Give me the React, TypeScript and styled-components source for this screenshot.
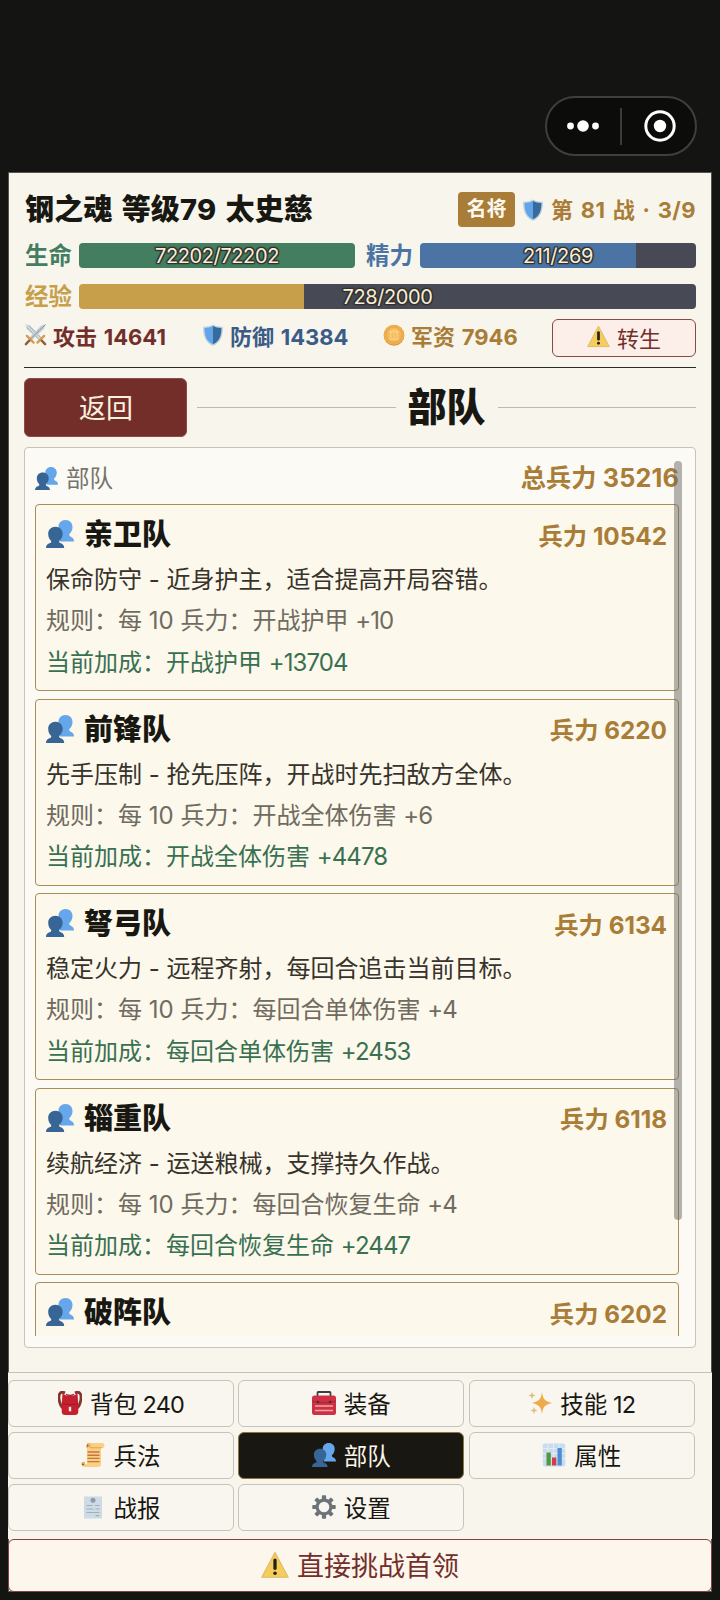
import React from "react";
import styled, { createGlobalStyle } from "styled-components";

const Global = createGlobalStyle`
  * { box-sizing: border-box; }
  body { margin: 0; background: #141412; }
  button { font: inherit; margin: 0; padding: 0; cursor: pointer; }
  svg { display: block; flex: none; }
`;

const ink = "#181712";
const gold = "#a97d37";
const wine = "#732e2a";

const Screen = styled.div`
  width: 720px;
  height: 1600px;
  padding: 0 8px 8px;
  display: flex;
  flex-direction: column;
  background: #141412;
  color: ${ink};
  font-family: Inter, "Noto Sans CJK SC", sans-serif;
  overflow: hidden;
`;

const SystemBar = styled.div`
  height: 172px;
  flex: none;
  display: flex;
  justify-content: flex-end;
  align-items: flex-end;
  padding: 0 15px 16px 0;
`;

const Capsule = styled.div`
  width: 152px;
  height: 60px;
  border: 2px solid #3f3f3d;
  border-radius: 30px;
  background: #0c0c0b;
  display: flex;
  align-items: center;
  justify-content: space-between;
  padding: 0 19px;
`;

const CapsuleRule = styled.i`
  width: 2px;
  height: 37px;
  margin-right: 2px;
  background: #3b3b39;
`;

const Page = styled.main`
  height: 1420px;
  display: flex;
  flex-direction: column;
  background: #f7f5ec;
  border: 1px solid #55534b;
`;

const Hero = styled.header`
  margin: 0 15px;
  height: 195px;
  flex: none;
  border-bottom: 1px solid #2b2a24;
`;

const NameRow = styled.div`
  display: flex;
  align-items: center;
  height: 35px;
  margin-top: 19px;
`;

const HeroName = styled.h1`
  margin: 0 0 0 1px;
  flex: 1;
  font-size: 29px;
  line-height: 34px;
  font-weight: 800;
  letter-spacing: 0.2px;
  word-spacing: 2.5px;
  white-space: pre;
`;

const Rank = styled.span`
  width: 57px;
  height: 35px;
  border-radius: 4px;
  background: ${gold};
  color: #fdf9ee;
  font-size: 20px;
  font-weight: 700;
  line-height: 34px;
  text-align: center;
`;

const Battle = styled.span`
  display: flex;
  align-items: center;
  gap: 7px;
  margin-left: 7px;
  color: ${gold};
  font-size: 22px;
  font-weight: 700;
  line-height: 34px;
  letter-spacing: 0.4px;
  word-spacing: 1.8px;
  white-space: pre;
`;

const Meters = styled.div`
  display: flex;
  height: 25px;
  margin-top: 16px;
  gap: 10px;
`;

const MeterBox = styled.div`
  flex: 1;
  display: flex;
`;

const MeterLabel = styled.span<{ $tone: string }>`
  width: 55px;
  padding-left: 1px;
  color: ${(p) => p.$tone};
  font-size: 23.5px;
  font-weight: 700;
  line-height: 25px;
  white-space: nowrap;
`;

const Track = styled.div<{ $fill: number; $tone: string }>`
  flex: 1;
  border-radius: 4px;
  background: linear-gradient(
    to right,
    ${(p) => p.$tone} ${(p) => p.$fill}%,
    #474954 ${(p) => p.$fill}%
  );
  color: #f5eed9;
  font-size: 20px;
  line-height: 26px;
  letter-spacing: -0.4px;
  text-align: center;
  text-shadow: 1px 0 1px #34322c, -1px 0 1px #34322c, 0 1px 1px #34322c,
    0 -1px 1px #34322c, 1px 1px 1px #34322c, -1px -1px 1px #34322c,
    1px -1px 1px #34322c, -1px 1px 1px #34322c;
`;

const Stats = styled.div`
  display: flex;
  height: 39px;
  margin-top: 10px;
`;

const Stat = styled.span<{ $tone: string; $w: number }>`
  width: ${(p) => p.$w}px;
  height: 31px;
  display: flex;
  align-items: center;
  gap: 6px;
  color: ${(p) => p.$tone};
  font-size: 22px;
  font-weight: 700;
  word-spacing: 1.5px;
  white-space: pre;
`;

const Rebirth = styled.button`
  width: 144px;
  height: 38px;
  margin-left: auto;
  padding-bottom: 3px;
  display: flex;
  align-items: center;
  justify-content: center;
  gap: 7px;
  border: 1px solid #874a45;
  border-radius: 6px;
  background: #fcefea;
  color: ${wine};
  font-size: 22px;
`;

const Heading = styled.div`
  display: flex;
  align-items: center;
  height: 59px;
  margin: 10px 15px 0;
  flex: none;
`;

const Back = styled.button`
  width: 163px;
  height: 59px;
  margin-right: 10px;
  padding: 0 0 3px 1px;
  border: 1px solid #8f4b45;
  border-radius: 6px;
  background: ${wine};
  color: #fbf1df;
  font-size: 27px;
`;

const Rule = styled.i`
  flex: 1;
  height: 1px;
  background: #bcbab2;
`;

const SectionTitle = styled.h2`
  width: 102px;
  margin: 0;
  padding-bottom: 2px;
  font-size: 39px;
  line-height: 56px;
  font-weight: 800;
  text-align: center;
  white-space: nowrap;
`;

const Panel = styled.section`
  position: relative;
  height: 901px;
  flex: none;
  margin: 10px 15px 24px;
  padding: 11px 16px 11px 10px;
  border: 1px solid #c6c3ba;
  border-radius: 4px;
  background: #fbfaf5;
`;

const Scroll = styled.div`
  height: 877px;
  overflow: hidden;
  display: flex;
  flex-direction: column;
`;

const Total = styled.div`
  height: 45px;
  flex: none;
  display: flex;
  align-items: flex-start;
  justify-content: space-between;
  line-height: 39px;
  font-size: 23.5px;
  color: #77736b;
`;

const Tag = styled.span`
  display: flex;
  align-items: center;
  gap: 8px;
  height: 38px;
`;

const Force = styled.b<{ $large?: boolean }>`
  color: ${gold};
  font-size: ${(p) => (p.$large ? 25.2 : 24.3)}px;
  font-weight: 700;
  letter-spacing: ${(p) => (p.$large ? 0.15 : 0)}px;
  white-space: pre;
`;

const Thumb = styled.i`
  position: absolute;
  top: 13px;
  left: 649px;
  width: 8px;
  height: 759px;
  border-radius: 4px;
  background: rgba(105, 103, 98, 0.5);
`;

const Card = styled.article`
  height: 187px;
  flex: none;
  margin-bottom: 7.5px;
  padding: 8px 11px 0 10px;
  border: 1px solid #ab8c55;
  border-radius: 4px;
  background: #fcf8eb;
`;

const CardHead = styled.div`
  height: 42px;
  display: flex;
  align-items: center;
  gap: 10px;
`;

const CardName = styled.h3`
  flex: 1;
  margin: 0;
  padding-top: 2px;
  font-size: 29px;
  font-weight: 800;
  line-height: 40px;
`;

const Line = styled.p<{ $tone: string }>`
  margin: 0;
  height: 41.3px;
  line-height: 50px;
  font-size: 24px;
  color: ${(p) => p.$tone};
  white-space: pre;
`;

const Num = styled.span`
  letter-spacing: -0.9px;
`;

const Nav = styled.nav`
  display: grid;
  grid-template-columns: repeat(3, 225.8px);
  grid-auto-rows: 47px;
  gap: 5px 4.6px;
  height: 167px;
  flex: none;
  margin: 0 -1px;
  padding-top: 7px;
  border-top: 1px solid #c4c1b8;
  background: #f7f5ec;
`;

const NavButton = styled.button<{ $on?: boolean }>`
  display: flex;
  align-items: center;
  justify-content: center;
  gap: 8px;
  padding-bottom: 2px;
  border: 1px solid ${(p) => (p.$on ? "#8e7440" : "#c6c3ba")};
  border-radius: 6px;
  background: ${(p) => (p.$on ? "#181712" : "#f8f6ee")};
  color: ${(p) => (p.$on ? "#fbf5e6" : ink)};
  font-size: 23.5px;
  white-space: pre;
`;

const Challenge = styled.button`
  flex: 1;
  margin: 0 -1px -1px;
  padding-bottom: 2px;
  display: flex;
  align-items: center;
  justify-content: center;
  gap: 8px;
  border: 1px solid #85413b;
  border-radius: 6px;
  background: #fdf6ec;
  color: ${wine};
  font-size: 27px;
`;

type IconProps = { size: number };

const Shield = ({ size }: IconProps) => (
  <svg width={size} height={size} viewBox="0 0 24 24">
    <path d="M12 .5C9 2.500 5 3.100 1.300 2.900 1 12 3.200 20 12 23.800c8.800-3.800 11-11.800 10.700-20.900C19 3.100 15 2.500 12 .5z" fill="#b9cfe0" />
    <path d="M12 2.200C9.500 3.600 6 4.400 2.800 4.300 2.700 12 4.700 18.800 12 22.200z" fill="#62a5e6" />
    <path d="M12 2.200c2.500 1.400 6 2.200 9.200 2.100C21.300 12 19.300 18.800 12 22.200z" fill="#386a9e" />
  </svg>
);

const Swords = ({ size }: IconProps) => (
  <svg width={size} height={size} viewBox="0 0 24 24">
    <path d="M1.500 1.500l4.500 1.200L19 16l-2.500 2.500L3 6z" fill="#aebac2" />
    <path d="M1.500 1.500L17.800 17.300" stroke="#e3e8ea" strokeWidth="1.200" />
    <path d="M22.500 1.500L18 2.700 5 16l2.500 2.500L21 6z" fill="#c3ccd2" />
    <path d="M22.500 1.500L6.200 17.300" stroke="#8795a0" strokeWidth="1" />
    <path d="M3 13.500l7 7M21 13.500l-7 7" stroke="#d99b4a" strokeWidth="2.400" strokeLinecap="round" />
    <path d="M5.500 18.500l-3.500 3.500M18.500 18.500l3.500 3.500" stroke="#8f5f3d" strokeWidth="2.600" strokeLinecap="round" />
  </svg>
);

const Coin = ({ size }: IconProps) => (
  <svg width={size} height={size} viewBox="0 0 24 24">
    <circle cx="12" cy="12.500" r="11.300" fill="#dc943b" />
    <circle cx="12" cy="11.700" r="11" fill="#f1ae4b" />
    <circle cx="12" cy="11.700" r="8.500" fill="#f4b95c" stroke="#e5a044" strokeWidth=".8" />
    <path d="M7 9l5-2.700L17 9zM8.500 10v5M12 10v5M15.500 10v5M7 16.500h10" stroke="#fbd68c" strokeWidth="1.200" fill="none" />
  </svg>
);

const Warning = ({ size }: IconProps) => (
  <svg width={size} height={size} viewBox="0 0 24 24">
    <path d="M12 1.200L23.300 22.500H.7z" fill="#f5cd5c" stroke="#dfbc62" strokeWidth="1" strokeLinejoin="round" />
    <path d="M12 7.800v7" stroke="#252119" strokeWidth="2.800" strokeLinecap="round" />
    <circle cx="12" cy="19" r="1.500" fill="#252119" />
  </svg>
);

const People = ({ size }: IconProps) => (
  <svg width={size} height={size} viewBox="0 0 28 28">
    <path d="M19.500 0c4.300 0 7 3 7 7 0 3-1.300 5.500-3.200 7.100-.2 1.600.2 2.200 1.500 2.700 2 .7 3.200 2.200 3.200 4.700H14V11.500L12.500 7c0-4 2.700-7 7-7z" fill="#66a6ea" />
    <path d="M9.500 6.800c4.300 0 7.200 2.900 7.200 6.900 0 3-1.500 5.500-3.500 7.200-.2 1.300.3 1.900 1.700 2.400 2 .7 3.300 2.200 3.300 4.700H0c0-2.500 1.300-4 3.400-4.700 1.600-.5 2-1.100 1.800-2.400-1.800-1.500-3-4.200-3-7.200 0-4 3-6.900 7.300-6.900z" fill="#376596" />
  </svg>
);

const Backpack = ({ size }: IconProps) => (
  <svg width={size} height={size} viewBox="0 0 24 24">
    <path d="M7 2C2-.5 0 3.500 1.400 10c.6 3 1.500 5.500 3.500 7M17 2c5-2.500 7 1.500 5.600 8-.6 3-1.500 5.500-3.500 7" fill="none" stroke="#84352f" strokeWidth="2.800" />
    <path d="M4.500 2.500Q12 7.500 19.500 2.500l.8 11V20.500q0 3.500-3.500 3.500H7.200q-3.500 0-3.500-3.500v-7z" fill="#c5202f" />
    <path d="M8 3.300q4 2.200 8 0M4.500 12.500q7.500 2 15 0" fill="none" stroke="#9e1b29" strokeWidth="1.200" />
    <rect x="10.800" y="15.800" width="2.400" height="4.500" fill="#f3e7e1" />
  </svg>
);

const Toolbox = ({ size }: IconProps) => (
  <svg width={size} height={size} viewBox="0 0 24 24">
    <path d="M5.500 5V1.700q0-.7.7-.7h11.600q.7 0 .7.700V5" fill="none" stroke="#3c3e48" strokeWidth="1.800" />
    <rect x="0" y="4.500" width="24" height="19.500" rx="2.500" fill="#ce3144" />
    <path d="M0 10q12 3.500 24 0" stroke="#a42637" fill="none" />
    <path d="M4.800 10.500l2.200 1M17 11.500l2.200-1" stroke="#45313a" strokeWidth="2.400" />
    <path d="M3 15h18M3 19.500h18" stroke="#efa4a7" strokeWidth="1.300" />
  </svg>
);

const Sparkles = ({ size }: IconProps) => (
  <svg width={size} height={size} viewBox="0 0 24 24">
    <path d="M14 1c1 7 2.500 9.300 10 11-7.500 1.700-9 4-10 11-1-7-2.500-9.300-10-11 7.500-1.700 9-4 10-11z" fill="#efab4b" />
    <path d="M4 .5c.6 2.800 1 3.500 4 4-3 .6-3.400 1.300-4 4-.6-2.700-1-3.400-4-4 3-.5 3.400-1.200 4-4zM6 15.500c.6 2.800 1 3.500 4 4-3 .6-3.400 1.300-4 4-.6-2.700-1-3.400-4-4 3-.5 3.400-1.200 4-4z" fill="#e3c089" />
  </svg>
);

const Scroller = ({ size }: IconProps) => (
  <svg width={size} height={size} viewBox="0 0 24 24">
    <path d="M6 0h15.500C24 0 24 5 21.500 5H20v15.500q0 3.500-3 3.500H3.500C0 24-.5 19 2 19q1.800 0 1.800 2H6z" fill="#fad184" />
    <path d="M6 5V2.200Q6 .5 7.500.5 9.500.5 9 4.800h12M1 21.500Q1 19 3.200 19.200v2.600" fill="none" stroke="#dca350" strokeWidth="1" />
    <circle cx="6.800" cy="2.800" r="1" fill="#8d5a34" />
    <circle cx="2" cy="21.500" r="1" fill="#8d5a34" />
    <path d="M6.500 9h12M6.500 12.200h12M6.500 15.400h12M6.500 18.600h12" stroke="#c7753c" strokeWidth="1.400" />
  </svg>
);

const Chart = ({ size }: IconProps) => (
  <svg width={size} height={size} viewBox="0 0 24 24">
    <rect x=".8" y=".5" width="22.400" height="23" rx="2" fill="#c9dcee" />
    <path d="M1 5.500h22M1 10.500h22M1 15.500h22M6 1v22M11.500 1v22M17 1v22" stroke="#e8f0f7" strokeWidth=".8" />
    <rect x="4.500" y="9.500" width="4.300" height="13" fill="#55953f" />
    <rect x="10" y="14.500" width="4.300" height="8" fill="#cf3e49" />
    <rect x="15.500" y="5" width="4.300" height="17.500" fill="#4e8dd2" />
  </svg>
);

const Receipt = ({ size }: IconProps) => (
  <svg width={size} height={size} viewBox="0 0 24 24">
    <path d="M3 1l1.500 1L6 1l1.500 1L9 1l1.500 1L12 1l1.500 1L15 1l1.500 1L18 1l1.500 1L21 1v22.500H3z" fill="#cfdbe4" />
    <circle cx="12" cy="5.300" r="2.500" fill="#899daf" />
    <path d="M5.500 10.500h6M14 10.500h4.500M5.500 14h7M14.500 14h4M5.500 17.500h13M14.500 20.700h4" stroke="#9db0bf" strokeWidth="1.200" />
  </svg>
);

const Gear = ({ size }: IconProps) => (
  <svg width={size} height={size} viewBox="0 0 24 24">
    {[0, 45, 90, 135, 180, 225, 270, 315].map((a) => (
      <path key={a} d="M10.800 5V1.200h2.400V5z" fill="#6c737a" stroke="#6c737a" strokeWidth="1.800" strokeLinejoin="round" transform={`rotate(${a} 12 12)`} />
    ))}
    <circle cx="12" cy="12" r="6.900" fill="none" stroke="#6c737a" strokeWidth="3.200" />
  </svg>
);

const Dots = () => (
  <svg width="34" height="12" viewBox="0 0 34 12">
    <g fill="#fff">
      <circle cx="4.500" cy="6" r="3.400" />
      <circle cx="17" cy="6" r="5.800" />
      <circle cx="29.500" cy="6" r="3.400" />
    </g>
  </svg>
);

const Target = () => (
  <svg width="32" height="32" viewBox="0 0 32 32">
    <circle cx="16" cy="16" r="14.200" fill="none" stroke="#fff" strokeWidth="3" />
    <circle cx="16" cy="16" r="6.200" fill="#fff" />
  </svg>
);

type MeterProps = { label: string; tone: string; fill: number; value: string };

const Meter = ({ label, tone, fill, value }: MeterProps) => (
  <MeterBox>
    <MeterLabel $tone={tone}>{label}</MeterLabel>
    <Track $fill={fill} $tone={tone}>{value}</Track>
  </MeterBox>
);

const troops = [
  { name: "亲卫队", force: 10542, role: "保命防守 - 近身护主，适合提高开局容错。", effect: "开战护甲", per: 10, bonus: 13704 },
  { name: "前锋队", force: 6220, role: "先手压制 - 抢先压阵，开战时先扫敌方全体。", effect: "开战全体伤害", per: 6, bonus: 4478 },
  { name: "弩弓队", force: 6134, role: "稳定火力 - 远程齐射，每回合追击当前目标。", effect: "每回合单体伤害", per: 4, bonus: 2453 },
  { name: "辎重队", force: 6118, role: "续航经济 - 运送粮械，支撑持久作战。", effect: "每回合恢复生命", per: 4, bonus: 2447 },
  { name: "破阵队", force: 6202 },
];

const tabs = [
  { label: "背包", count: 240, Icon: Backpack },
  { label: "装备", Icon: Toolbox },
  { label: "技能", count: 12, Icon: Sparkles },
  { label: "兵法", Icon: Scroller },
  { label: "部队", Icon: People, on: true },
  { label: "属性", Icon: Chart },
  { label: "战报", Icon: Receipt },
  { label: "设置", Icon: Gear },
];

export default function App() {
  return (
    <Screen lang="zh-CN">
      <Global />
      <SystemBar>
        <Capsule>
          <Dots />
          <CapsuleRule />
          <Target />
        </Capsule>
      </SystemBar>
      <Page>
        <Hero>
          <NameRow>
            <HeroName>钢之魂 等级79 太史慈</HeroName>
            <Rank>名将</Rank>
            <Battle>
              <Shield size={22} />
              第 81 战 · 3/9
            </Battle>
          </NameRow>
          <Meters>
            <Meter label="生命" tone="#437e61" fill={100} value="72202/72202" />
            <Meter label="精力" tone="#4b74a5" fill={78.4} value="211/269" />
          </Meters>
          <Meters>
            <Meter label="经验" tone="#c79f4b" fill={36.4} value="728/2000" />
          </Meters>
          <Stats>
            <Stat $tone={wine} $w={178}><Swords size={23} />攻击 14641</Stat>
            <Stat $tone="#3b5c87" $w={181}><Shield size={22} />防御 14384</Stat>
            <Stat $tone={gold} $w={150}><Coin size={22} />军资 7946</Stat>
            <Rebirth><Warning size={23} />转生</Rebirth>
          </Stats>
        </Hero>
        <Heading>
          <Back>返回</Back>
          <Rule />
          <SectionTitle>部队</SectionTitle>
          <Rule />
        </Heading>
        <Panel>
          <Scroll>
            <Total>
              <Tag><People size={23} />部队</Tag>
              <Force $large>总兵力 35216</Force>
            </Total>
            {troops.map((t) => (
              <Card key={t.name}>
                <CardHead>
                  <People size={28} />
                  <CardName>{t.name}</CardName>
                  <Force>兵力 {t.force}</Force>
                </CardHead>
                {t.role && (
                  <>
                    <Line $tone="#37332c">{t.role}</Line>
                    <Line $tone="#706b61">
                      规则：每 10 兵力：{t.effect} <Num>+{t.per}</Num>
                    </Line>
                    <Line $tone="#397052">
                      当前加成：{t.effect} <Num>+{t.bonus}</Num>
                    </Line>
                  </>
                )}
              </Card>
            ))}
          </Scroll>
          <Thumb />
        </Panel>
        <Nav>
          {tabs.map(({ label, count, Icon, on }) => (
            <NavButton key={label} $on={on}>
              <Icon size={24} />
              <span>{label}{count && <Num> {count}</Num>}</span>
            </NavButton>
          ))}
        </Nav>
        <Challenge><Warning size={28} />直接挑战首领</Challenge>
      </Page>
    </Screen>
  );
}
